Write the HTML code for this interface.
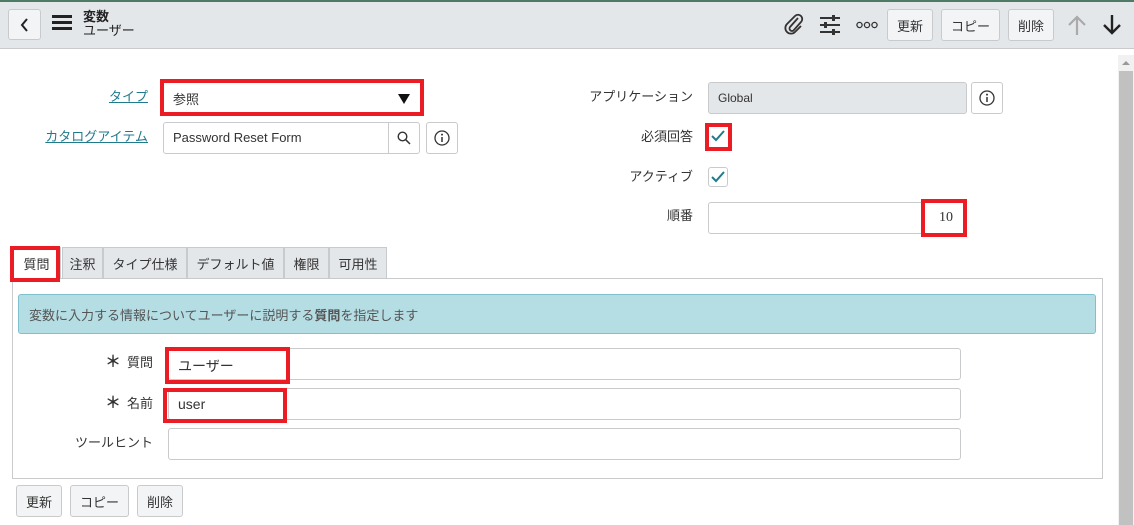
<!DOCTYPE html>
<html><head><meta charset="utf-8"><style>
*{box-sizing:border-box;margin:0;padding:0}
body{width:1134px;height:525px;overflow:hidden;background:#fff;font-family:"Liberation Sans","Noto Sans CJK JP",sans-serif;font-size:13px;color:#333;position:relative}
.a{position:absolute}
.btn{position:absolute;border:1px solid #c8cacc;border-radius:3px;background:#f3f4f5;display:flex;align-items:center;justify-content:center;font-size:13px;color:#333}
.inp{position:absolute;border:1px solid #c8cacc;border-radius:3px;background:#fff}
.red{position:absolute;border:4px solid #ec1c24}
.lbl{position:absolute;text-align:right;font-size:13px;color:#333;line-height:16px}
.tab{position:absolute;top:247px;height:31px;background:#e4e7ea;border:1px solid #c8cacc;border-bottom:none;display:flex;align-items:center;justify-content:center;font-size:13px;color:#333}
.chk{position:absolute;width:20px;height:20px;border:1px solid #c8cacc;border-radius:3px;background:#fff}
</style></head><body>
<div class="a" style="left:0;top:0;width:1134px;height:2px;background:#4f7a66"></div>
<div class="a" style="left:0;top:2px;width:1134px;height:47px;background:#e4e7ea;border-bottom:1px solid #c8cacc"></div>
<div class="btn" style="left:8px;top:9px;width:33px;height:31px"><svg width="12" height="14" viewBox="0 0 12 14"><path d="M8 1L3 7l5 6" stroke="#222" stroke-width="2" fill="none"/></svg></div>
<div class="a" style="left:52px;top:15px;width:20px;height:3px;background:#222;box-shadow:0 6px 0 #222,0 12px 0 #222"></div>
<div class="a" style="left:83px;top:9px;font-size:13px;font-weight:bold;color:#222;line-height:15px">変数</div>
<div class="a" style="left:83px;top:23px;font-size:13px;color:#222;line-height:15px">ユーザー</div>
<svg class="a" style="left:783px;top:13px" width="22" height="22" viewBox="0 0 22 22"><path d="M15 5L7 14a2.5 2.5 0 0 0 3.5 3.5L18 9a4 4 0 0 0-6-6L4 11a5.5 5.5 0 0 0 8 8l6-6" stroke="#333" stroke-width="1.8" fill="none"/></svg>
<svg class="a" style="left:819px;top:14px" width="22" height="22" viewBox="0 0 22 22"><path d="M1 4h20M1 11h20M1 18h20" stroke="#333" stroke-width="2"/><rect x="13" y="1" width="3" height="6" fill="#333"/><rect x="5" y="8" width="3" height="6" fill="#333"/><rect x="13" y="15" width="3" height="6" fill="#333"/></svg>
<svg class="a" style="left:856px;top:21px" width="22" height="8" viewBox="0 0 22 8"><circle cx="3.5" cy="4" r="2.6" stroke="#333" stroke-width="1.3" fill="none"/><circle cx="11" cy="4" r="2.6" stroke="#333" stroke-width="1.3" fill="none"/><circle cx="18.5" cy="4" r="2.6" stroke="#333" stroke-width="1.3" fill="none"/></svg>
<div class="btn" style="left:887px;top:9px;width:46px;height:32px">更新</div>
<div class="btn" style="left:941px;top:9px;width:59px;height:32px">コピー</div>
<div class="btn" style="left:1008px;top:9px;width:46px;height:32px">削除</div>
<svg class="a" style="left:1066px;top:14px" width="22" height="22" viewBox="0 0 22 22"><path d="M11 21V3M3 11l8-8 8 8" stroke="#aaa" stroke-width="2.2" fill="none"/></svg>
<svg class="a" style="left:1101px;top:14px" width="22" height="22" viewBox="0 0 22 22"><path d="M11 1v18M3 11l8 8 8-8" stroke="#222" stroke-width="2.4" fill="none"/></svg>
<div class="a" style="left:1118px;top:55px;width:16px;height:470px;background:#f1f1f1"></div>
<div class="a" style="left:1119px;top:71px;width:14px;height:454px;background:#c1c1c1"></div>
<div class="a" style="left:1122px;top:61px;width:0;height:0;border-left:4px solid transparent;border-right:4px solid transparent;border-bottom:4px solid #999"></div>

<div class="lbl" style="left:60px;width:88px;top:89px;color:#1f7a8c;text-decoration:underline">タイプ</div>
<div class="red" style="left:160px;top:79px;width:264px;height:37px"></div>
<div class="a" style="left:173px;top:89px">参照</div>
<div class="a" style="left:398px;top:94px;width:0;height:0;border-left:6px solid transparent;border-right:6px solid transparent;border-top:10px solid #111"></div>

<div class="lbl" style="left:20px;width:128px;top:129px;color:#1f7a8c;text-decoration:underline">カタログアイテム</div>
<div class="inp" style="left:163px;top:122px;width:257px;height:32px"></div>
<div class="a" style="left:388px;top:123px;width:1px;height:30px;background:#c8cacc"></div>
<div class="a" style="left:173px;top:130px">Password Reset Form</div>
<svg class="a" style="left:397px;top:131px" width="14" height="14" viewBox="0 0 14 14"><circle cx="5.5" cy="5.5" r="4.3" stroke="#333" stroke-width="1.4" fill="none"/><path d="M8.7 8.7L13 13" stroke="#333" stroke-width="1.5"/></svg>
<div class="inp" style="left:426px;top:122px;width:32px;height:32px"></div>
<svg class="a" style="left:434px;top:130px" width="16" height="16" viewBox="0 0 16 16"><circle cx="8" cy="8" r="7" stroke="#333" stroke-width="1.3" fill="none"/><circle cx="8" cy="4.6" r="1" fill="#333"/><path d="M8 7v5" stroke="#333" stroke-width="1.5"/></svg>

<div class="lbl" style="left:560px;width:133px;top:89px">アプリケーション</div>
<div class="inp" style="left:708px;top:82px;width:259px;height:32px;background:#e4e7ea"></div>
<div class="a" style="left:718px;top:91px;font-size:12px">Global</div>
<div class="inp" style="left:971px;top:82px;width:32px;height:32px"></div>
<svg class="a" style="left:979px;top:90px" width="16" height="16" viewBox="0 0 16 16"><circle cx="8" cy="8" r="7" stroke="#333" stroke-width="1.3" fill="none"/><circle cx="8" cy="4.6" r="1" fill="#333"/><path d="M8 7v5" stroke="#333" stroke-width="1.5"/></svg>

<div class="lbl" style="left:560px;width:133px;top:129px">必須回答</div>
<div class="red" style="left:705px;top:123px;width:27px;height:28px"></div>
<svg class="a" style="left:710px;top:129px" width="16" height="14" viewBox="0 0 16 14"><path d="M2 7l4 4 8-9" stroke="#1f7a8c" stroke-width="2" fill="none"/></svg>
<div class="lbl" style="left:560px;width:133px;top:169px">アクティブ</div>
<div class="chk" style="left:708px;top:167px"></div>
<svg class="a" style="left:710px;top:170px" width="16" height="14" viewBox="0 0 16 14"><path d="M2 7l4 4 8-9" stroke="#1f7a8c" stroke-width="2" fill="none"/></svg>
<div class="lbl" style="left:560px;width:133px;top:208px">順番</div>
<div class="inp" style="left:708px;top:202px;width:259px;height:32px"></div>
<div class="red" style="left:921px;top:199px;width:46px;height:38px"></div>
<div class="a" style="left:939px;top:210px;font-family:'Liberation Serif',serif;font-size:14px">10</div>

<div class="a" style="left:12px;top:278px;width:1091px;height:201px;border:1px solid #c8cacc"></div>
<div class="tab" style="left:12px;width:49px;background:#fff;height:32px">質問</div>
<div class="red" style="left:10px;top:246px;width:50px;height:36px"></div>
<div class="tab" style="left:62px;width:41px">注釈</div>
<div class="tab" style="left:103px;width:84px">タイプ仕様</div>
<div class="tab" style="left:187px;width:97px">デフォルト値</div>
<div class="tab" style="left:284px;width:45px">権限</div>
<div class="tab" style="left:329px;width:58px">可用性</div>
<div class="a" style="left:18px;top:294px;width:1078px;height:40px;background:#b5dde4;border:1px solid #7fc0cf;border-radius:3px"></div>
<div class="a" style="left:29px;top:305px;color:#555">変数に入力する情報についてユーザーに説明する<b>質問</b>を指定します</div>

<div class="lbl" style="left:60px;width:93px;top:355px"><span style="font-size:16px;font-weight:bold;margin-right:6px">＊</span>質問</div>
<div class="inp" style="left:168px;top:348px;width:793px;height:32px"></div>
<div class="red" style="left:165px;top:347px;width:125px;height:37px"></div>
<div class="a" style="left:178px;top:356px;font-size:14px">ユーザー</div>
<div class="lbl" style="left:60px;width:93px;top:396px"><span style="font-size:16px;font-weight:bold;margin-right:6px">＊</span>名前</div>
<div class="inp" style="left:168px;top:388px;width:793px;height:32px"></div>
<div class="red" style="left:163px;top:388px;width:124px;height:35px"></div>
<div class="a" style="left:178px;top:396px;font-size:14px">user</div>
<div class="lbl" style="left:40px;width:113px;top:435px">ツールヒント</div>
<div class="inp" style="left:168px;top:428px;width:793px;height:32px"></div>

<div class="btn" style="left:16px;top:485px;width:46px;height:32px">更新</div>
<div class="btn" style="left:70px;top:485px;width:59px;height:32px">コピー</div>
<div class="btn" style="left:137px;top:485px;width:46px;height:32px">削除</div>
</body></html>
